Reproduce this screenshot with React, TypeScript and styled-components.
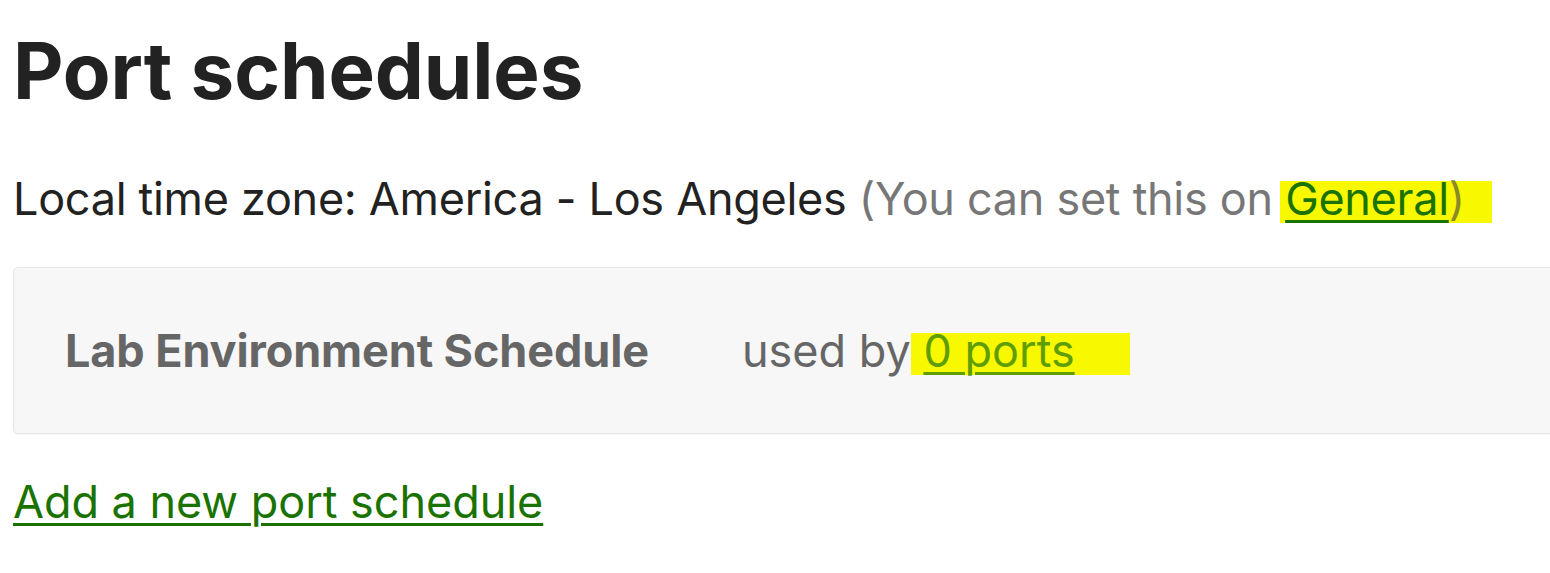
import React from 'react';
import styled, { createGlobalStyle } from 'styled-components';

const GlobalStyle = createGlobalStyle`
  body {
    margin: 0;
    background: #fff;
    font-family: Inter, "Noto Sans", sans-serif;
    color: #222;
    overflow: hidden;
  }
`;

const Page = styled.main`
  padding: 0 0 0 13px;
  font-size: 45px;
  line-height: 54px;
`;

const Title = styled.h1`
  margin: 24px 0 0;
  font-size: 78px;
  line-height: 94px;
  font-weight: 700;
  color: #222;
  letter-spacing: -0.1px;
`;

const TimeZone = styled.p`
  margin: 54px 0 0;
  color: #222;
  letter-spacing: -0.3px;
`;

const Hint = styled.span`
  color: #777;
`;

// highlighter-pen band behind a link
const Marker = styled.span<{ $padRight?: number; $inset?: number; $tone?: string }>`
  background-image: linear-gradient(#f8f800, #f8f800);
  background-repeat: no-repeat;
  background-position: ${({ $inset }) => $inset || 0}px 10px;
  background-size: calc(100% - ${({ $inset }) => $inset || 0}px) 42px;
  padding: 0 ${({ $padRight }) => $padRight || 0}px 0 0;
  color: ${({ $tone }) => $tone || '#1a7300'};
`;

const Link = styled.a<{ $color?: string }>`
  color: ${({ $color }) => $color || '#1a7300'};
  text-decoration: underline;
  text-decoration-thickness: 3px;
  text-underline-offset: 5px;
  cursor: pointer;
`;

const ScheduleCard = styled.section`
  margin: 41px -40px 0 0;
  height: 167px;
  box-sizing: border-box;
  display: grid;
  grid-template-columns: 677px 1fr;
  align-items: center;
  padding: 0 0 0 51px;
  background: #f7f7f7;
  border: 1px solid #e6e6e6;
  border-radius: 5px;
  box-shadow: 0 1px 2px rgba(0, 0, 0, 0.04);
`;

const ScheduleName = styled.span`
  font-weight: 700;
  color: #666;
  letter-spacing: -0.1px;
`;

const UsedBy = styled.span`
  color: #666;
`;

const AddRow = styled.div`
  margin: 41px 0 0;
  letter-spacing: -0.05px;
`;

export default function App() {
  return (
    <>
      <GlobalStyle />
      <Page>
        <Title>Port schedules</Title>
        <TimeZone>
          Local time zone: America - Los Angeles{' '}
          <Hint>
            (You can set this on
            <Marker $tone="#8a8a28" $padRight={27} $inset={7}>
              {' '}
              <Link>General</Link>)
            </Marker>
          </Hint>
        </TimeZone>
        <ScheduleCard>
          <ScheduleName>Lab Environment Schedule</ScheduleName>
          <UsedBy>
            used by
            <Marker $padRight={55}>
              {' '}
              <Link $color="#5f9e00">0 ports</Link>
            </Marker>
          </UsedBy>
        </ScheduleCard>
        <AddRow>
          <Link>Add a new port schedule</Link>
        </AddRow>
      </Page>
    </>
  );
}
